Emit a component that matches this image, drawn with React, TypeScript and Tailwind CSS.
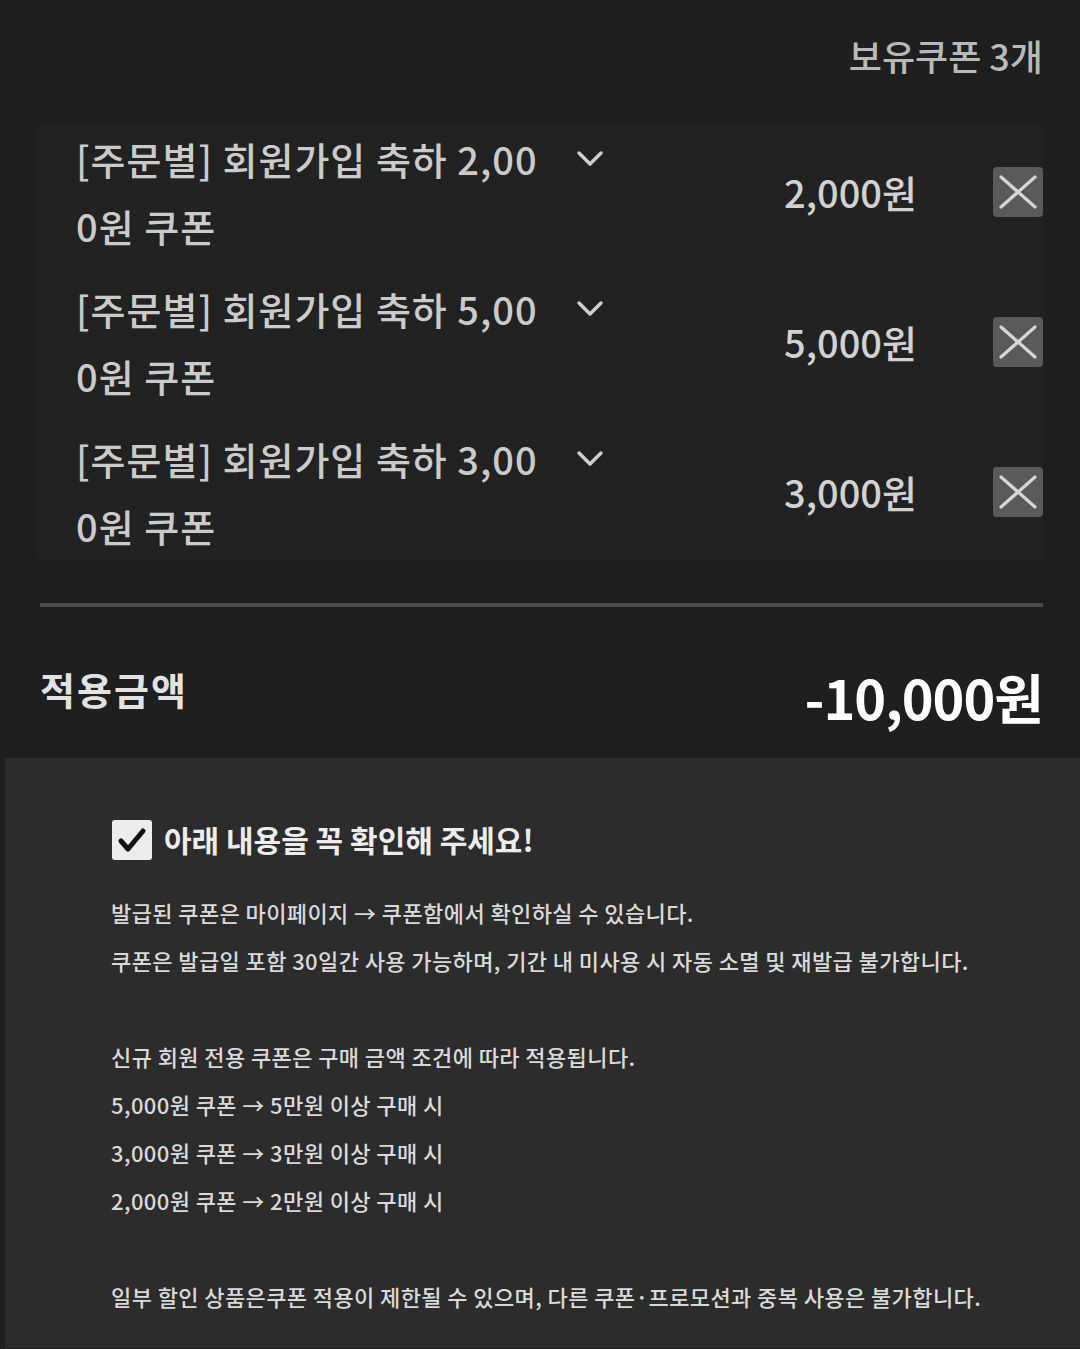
import React from 'react';

const coupons = [
  { title: '[주문별] 회원가입 축하 2,000원 쿠폰', amount: '2,000원' },
  { title: '[주문별] 회원가입 축하 5,000원 쿠폰', amount: '5,000원' },
  { title: '[주문별] 회원가입 축하 3,000원 쿠폰', amount: '3,000원' },
];

const notices = [
  '발급된 쿠폰은 마이페이지 → 쿠폰함에서 확인하실 수 있습니다.',
  '쿠폰은 발급일 포함 30일간 사용 가능하며, 기간 내 미사용 시 자동 소멸 및 재발급 불가합니다.',
  '',
  '신규 회원 전용 쿠폰은 구매 금액 조건에 따라 적용됩니다.',
  '5,000원 쿠폰 → 5만원 이상 구매 시',
  '3,000원 쿠폰 → 3만원 이상 구매 시',
  '2,000원 쿠폰 → 2만원 이상 구매 시',
  '',
  '일부 할인 상품은쿠폰 적용이 제한될 수 있으며, 다른 쿠폰·프로모션과 중복 사용은 불가합니다.',
];

const CouponRow: React.FC<{ title: string; amount: string }> = ({ title, amount }) => (
  <div className="flex items-center h-[134px]">
    <div className="flex items-start">
      <p className="w-[470px] break-all text-[38px] leading-[67px] font-medium tracking-[1px] text-[#cbcbcb]">{title}</p>
      <svg className="w-[30px] h-[20px] mt-[24px] ml-[29px]" viewBox="0 0 30 20" fill="none" stroke="#cfcfcf" strokeWidth="3.5" strokeLinecap="round" strokeLinejoin="round">
        <path d="M4 4l11 11 11-11" />
      </svg>
    </div>
    <span className="ml-auto text-[38px] font-medium text-[#d2d2d2] leading-none">{amount}</span>
    <button className="ml-[76px] w-[50px] h-[50px] rounded-[4px] bg-[#5a5a5a] flex items-center justify-center">
      <svg className="w-[50px] h-[50px]" viewBox="0 0 50 50" fill="none" stroke="#d6d6d6" strokeWidth="3.2" strokeLinecap="round">
        <path d="M8 10l34 30M42 10L8 40" />
      </svg>
    </button>
  </div>
);

export default function App() {
  return (
    <div className="w-[1080px] min-h-[1349px] bg-[#1f1f1f] font-['Noto_Sans_CJK_KR','Noto_Sans',sans-serif]">
      <div className="pl-[38px] pr-[37px] pt-[29px] pb-[25px]">
        <div className="flex justify-end">
          <span className="text-[36px] leading-[52px] font-medium text-[#b9b9b9]">보유쿠폰 3개</span>
        </div>

        <div className="mt-[44px] bg-[#222222] pl-[38px] flex flex-col gap-[16px]">
          {coupons.map((c) => (
            <CouponRow key={c.amount} title={c.title} amount={c.amount} />
          ))}
        </div>

        <div className="mt-[44px] h-[4px] bg-[#4a4a4a] ml-[2px]" />

        <div className="mt-[53px] flex items-center justify-between pl-[2px]">
          <span className="text-[38px] font-bold text-[#e2e2e2] tracking-[2px] mb-[16px]">적용금액</span>
          <span className="text-[54px] leading-[65px] font-bold text-white tracking-[-1px]">-10,000원</span>
        </div>
      </div>

      <div className="ml-[5px] bg-[#2c2c2c] pl-[106px] pr-[40px] pt-[59px] pb-[28px]">
        <div className="flex items-center gap-[12px] pl-[1px]">
          <div className="w-[40px] h-[40px] rounded-[3px] bg-[#ececec] flex items-center justify-center">
            <svg className="w-[40px] h-[40px]" viewBox="0 0 40 40" fill="none" stroke="#111" strokeWidth="5" strokeLinecap="round" strokeLinejoin="round">
              <path d="M9 21l7 8 15-18" />
            </svg>
          </div>
          <span className="text-[30px] font-bold text-[#ededed]">아래 내용을 꼭 확인해 주세요!</span>
        </div>

        <div className="mt-[26px]">
          {notices.map((line, i) => (
            <p key={i} className="h-[48px] text-[22px] leading-[48px] font-medium tracking-[0.4px] text-[#dadada]">{line}</p>
          ))}
        </div>
      </div>
    </div>
  );
}
